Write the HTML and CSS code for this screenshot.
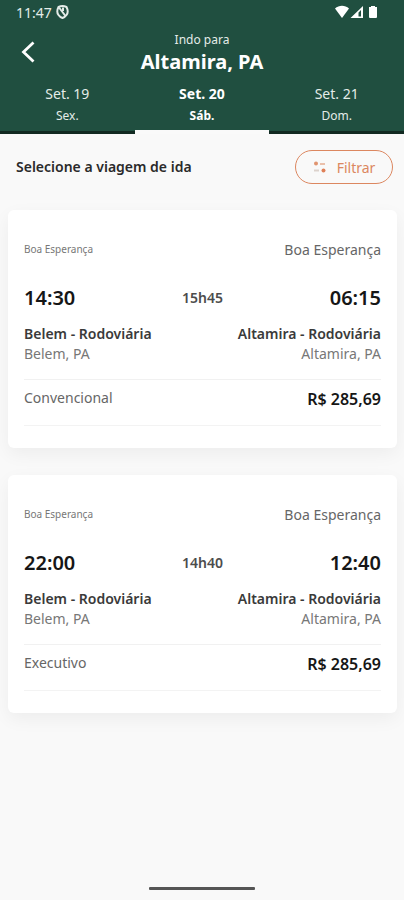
FILE: index.html
```html
<!DOCTYPE html>
<html lang="pt-BR">
<head>
<meta charset="utf-8">
<meta name="viewport" content="width=device-width, initial-scale=1">
<title>Altamira, PA</title>
<link rel="stylesheet" href="styles.css">
</head>
<body>
<header class="header">
  <div class="status">
    <span class="clock">11:47</span>
    <svg class="status-alarm" width="13" height="14" viewBox="0 0 13 14" fill="none" stroke="#e4ece8" stroke-width="2"><path d="M2.500 2C5 .9 8 .9 10.500 2 12 5 12 8 10.500 10 9.500 11.500 8 12.500 6.500 13 5 12.500 3.500 11.500 2.500 10 1 8 1 5 2.500 2z"/><path d="M3 2.500l6.500 8.500M7 2.500v3.500"/></svg>
    <svg class="status-icons" width="44" height="14" viewBox="0 0 44 14" fill="#fff"><path d="M1 3.500C5-.1 11-.1 15 3.500L8 13z"/><path fill-rule="evenodd" d="M16.500 13 29 1v12zM24.500 7.500V11.500H27V5z"/><path d="M37 1h4v1h2v10q0 1-1 1h-6q-1 0-1-1V2h2z"/></svg>
  </div>
  <div class="title-bar">
    <button class="back" type="button" aria-label="Voltar"><svg width="14" height="22" viewBox="0 0 14 22" fill="none" stroke="#fff" stroke-width="2.800"><path d="M12.500 1.500 2.500 11l10 9.500"/></svg></button>
    <div class="titles">
      <p class="eyebrow">Indo para</p>
      <h1>Altamira, PA</h1>
    </div>
  </div>
  <nav class="days">
    <a class="day" href="#"><span class="date">Set. 19</span><span class="weekday">Sex.</span></a>
    <a class="day active" href="#" aria-current="date"><span class="date">Set. 20</span><span class="weekday">Sáb.</span></a>
    <a class="day" href="#"><span class="date">Set. 21</span><span class="weekday">Dom.</span></a>
  </nav>
</header>
<main class="main">
  <div class="toolbar">
    <h2>Selecione a viagem de ida</h2>
    <button class="filter" type="button">
      <svg width="14" height="14" viewBox="0 0 14 14"><circle cx="3" cy="3.500" r="2" fill="#e09470"/><path d="M7 4h5" stroke="#e5ac90" stroke-width="1.500"/><path d="M1 10.500h5" stroke="#dcd2cc" stroke-width="2"/><circle cx="10.500" cy="10.500" r="2" fill="#df8058"/></svg>
      Filtrar
    </button>
  </div>
  <article class="card">
    <div class="row operators"><span class="operator-small">Boa Esperança</span><span class="operator">Boa Esperança</span></div>
    <div class="times"><time>14:30</time><span class="duration">15h45</span><time class="end">06:15</time></div>
    <div class="row stations"><strong>Belem - Rodoviária</strong><strong>Altamira - Rodoviária</strong></div>
    <div class="row cities"><span>Belem, PA</span><span>Altamira, PA</span></div>
    <div class="row fare"><span class="class">Convencional</span><strong class="price">R$ 285,69</strong></div>
  </article>
  <article class="card">
    <div class="row operators"><span class="operator-small">Boa Esperança</span><span class="operator">Boa Esperança</span></div>
    <div class="times"><time>22:00</time><span class="duration">14h40</span><time class="end">12:40</time></div>
    <div class="row stations"><strong>Belem - Rodoviária</strong><strong>Altamira - Rodoviária</strong></div>
    <div class="row cities"><span>Belem, PA</span><span>Altamira, PA</span></div>
    <div class="row fare"><span class="class">Executivo</span><strong class="price">R$ 285,69</strong></div>
  </article>
</main>
<footer class="home"><span class="home-bar"></span></footer>
</body>
</html>
```
FILE: styles.css
```css
* { box-sizing: border-box; }
body {
  margin: 0;
  min-height: 100vh;
  display: flex;
  flex-direction: column;
  background: #f9f9f9;
  color: #161616;
  font-family: "Noto Sans", sans-serif;
}
h1, h2, p { margin: 0; }
button { font: inherit; background: none; border: 0; padding: 0; cursor: pointer; }
svg { display: block; }

.header { background: #204f40; color: #fff; }
.status {
  display: flex;
  align-items: center;
  gap: 4px;
  height: 24px;
  padding: 0 26px 0 16px;
}
.clock { font-size: 14px; color: #e4ece8; }
.status-icons { margin-left: auto; }
.title-bar {
  display: grid;
  grid-template-columns: 40px 1fr 40px;
  align-items: center;
  height: 56px;
  padding: 0 8px;
}
.back { display: flex; justify-content: center; align-items: center; height: 40px; }
.titles { padding-top: 3px; text-align: center; }
.eyebrow { font-size: 12px; line-height: 16px; color: #e4ece8; }
h1 { font-size: 20px; line-height: 28px; }

.days { display: grid; grid-template-columns: repeat(3, 1fr); }
.day {
  display: flex;
  flex-direction: column;
  align-items: center;
  height: 54px;
  padding-top: 3px;
  border-bottom: 3px solid #122a22;
  color: #e4ece8;
  text-decoration: none;
}
.date { font-size: 14px; line-height: 22px; }
.weekday { font-size: 12px; line-height: 22px; }
.day.active { border-bottom: 4px solid #fafafa; color: #fff; font-weight: 700; }

.main { flex: 1; padding: 0 7px 0 8px; }
.toolbar {
  display: flex;
  align-items: center;
  justify-content: space-between;
  height: 76px;
  padding: 0 4px 10px 8px;
}
h2 { font-size: 14px; font-weight: 600; line-height: 20px; color: #2a2a2a; }
.filter {
  display: flex;
  align-items: center;
  justify-content: center;
  gap: 10px;
  width: 98px;
  height: 34px;
  border: 1px solid #dc8760;
  border-radius: 17px;
  color: #dc8760;
  font-size: 14px;
}

.card {
  margin-bottom: 27px;
  padding: 29px 16px 22px;
  border-radius: 6px;
  background: #fff;
  box-shadow: 0 6px 18px rgba(0, 0, 0, 0.05);
}
.row { display: flex; justify-content: space-between; align-items: center; }
.operators { height: 20px; color: #666; }
.operator-small { font-size: 10px; color: #777; }
.operator { font-size: 14px; }
.times {
  display: grid;
  grid-template-columns: 1fr auto 1fr;
  align-items: center;
  height: 28px;
  margin-top: 24px;
}
.times time { font-size: 20px; font-weight: 600; }
.times .end { text-align: right; }
.duration { font-size: 14px; font-weight: 600; color: #4c4c4c; }
.stations { margin-top: 13px; font-size: 14px; line-height: 20px; color: #3a3a3a; }
.stations strong { font-weight: 600; }
.cities { font-size: 14px; line-height: 20px; color: #777; }
.fare {
  align-items: flex-start;
  height: 47px;
  margin-top: 15px;
  padding-top: 8px;
  border-top: 1px solid #f1f1f1;
  border-bottom: 1px solid #f3f3f3;
  font-size: 14px;
  line-height: 20px;
}
.class { color: #666; }
.price { font-size: 16px; font-weight: 600; line-height: 22px; }

.home { display: flex; justify-content: center; padding-bottom: 10px; }
.home-bar { width: 106px; height: 3px; border-radius: 1px; background: #555; }
```
